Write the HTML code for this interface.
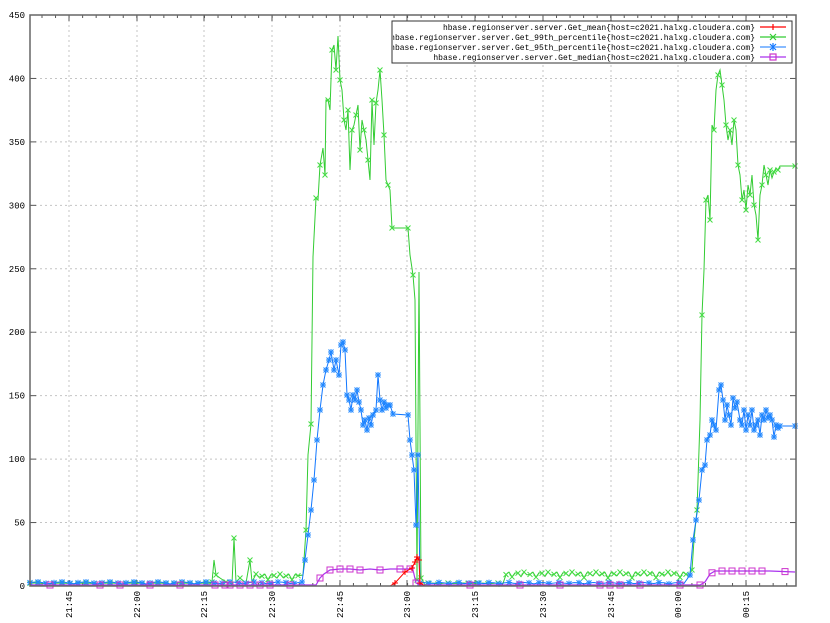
<!DOCTYPE html>
<html><head><meta charset="utf-8"><style>
html,body{margin:0;padding:0;background:#fff;width:830px;height:623px;overflow:hidden}
svg text{font-family:"Liberation Mono","DejaVu Sans Mono",monospace;font-size:9px;fill:#000}
svg text.lg{font-size:8px}
</style></head><body>
<svg id="s" width="830" height="623" xmlns="http://www.w3.org/2000/svg">
<g id="grid" stroke="#c4c4c4" stroke-width="1" stroke-dasharray="2,3"></g>
<g id="ticks" stroke="#555" stroke-width="1"></g>
<g id="labels"></g>
<g id="data"></g>
<rect x="30" y="15" width="766" height="571" fill="none" stroke="#666" stroke-width="1.5"/>
<rect x="392" y="21" width="400" height="42" fill="#fff" stroke="#333" stroke-width="1"/>
<svg x="393" y="21" width="398" height="42" overflow="hidden">
<g text-anchor="end">
<text class="lg" x="362" y="9">hbase.regionserver.server.Get_mean{host=c2021.halxg.cloudera.com}</text>
<text class="lg" x="362" y="19">hbase.regionserver.server.Get_99th_percentile{host=c2021.halxg.cloudera.com}</text>
<text class="lg" x="362" y="29">hbase.regionserver.server.Get_95th_percentile{host=c2021.halxg.cloudera.com}</text>
<text class="lg" x="362" y="39">hbase.regionserver.server.Get_median{host=c2021.halxg.cloudera.com}</text>
</g>
</svg>
<g stroke-width="1.2">
<line x1="760" y1="27" x2="786" y2="27" stroke="#f00"/><line x1="773" y1="24" x2="773" y2="30" stroke="#f00"/>
<line x1="760" y1="37" x2="786" y2="37" stroke="#3c3"/><path d="M770 34l6 6M776 34l-6 6" stroke="#3c3"/>
<line x1="760" y1="47" x2="786" y2="47" stroke="#8bf" stroke-width="2"/><path d="M770 44l6 6M776 44l-6 6M773 43v8" stroke="#17f"/>
<line x1="760" y1="57" x2="786" y2="57" stroke="#a3e"/><rect x="770" y="54" width="6" height="6" fill="none" stroke="#c3c"/>
</g>
</svg>
<script>
const NS="http://www.w3.org/2000/svg";
function el(p,t,a){const e=document.createElementNS(NS,t);for(const k in a)e.setAttribute(k,a[k]);p.appendChild(e);return e;}
const grid=document.getElementById('grid'),ticks=document.getElementById('ticks'),lab=document.getElementById('labels'),data=document.getElementById('data');
const y0=586,sc=571/450;
for(let v=0;v<=450;v+=50){const y=y0-v*sc;
 if(v>0&&v<450)el(grid,'line',{x1:30,y1:y,x2:796,y2:y});
 el(ticks,'line',{x1:30,y1:y,x2:36,y2:y});el(ticks,'line',{x1:790,y1:y,x2:796,y2:y});
 const t=el(lab,'text',{x:25,y:y+3,'text-anchor':'end'});t.textContent=v;}
const xs=[69,137,204,272,340,407,475,543,611,678,746],nm=["21:45","22:00","22:15","22:30","22:45","23:00","23:15","23:30","23:45","00:00","00:15"];
xs.forEach((x,i)=>{el(grid,'line',{x1:x,y1:15,x2:x,y2:586});
 el(ticks,'line',{x1:x,y1:586,x2:x,y2:580});el(ticks,'line',{x1:x,y1:15,x2:x,y2:21});
 const t=el(lab,'text',{x:0,y:0,'text-anchor':'end',transform:`translate(${x+3},591) rotate(-90)`});t.textContent=nm[i];});
for(let x=69-13.5*2;x<796;x+=13.54){el(ticks,'line',{x1:x,y1:586,x2:x,y2:583});el(ticks,'line',{x1:x,y1:15,x2:x,y2:18});}
function noise(a,b,base,amp,step){const r=[];for(let x=a;x<=b;x+=step)r.push([x,base-Math.abs(Math.sin(x*1.7)*amp)]);return r;}
function P(arr){const r=[];for(let i=0;i<arr.length;i+=2)r.push([arr[i],arr[i+1]]);return r;}
const green=[].concat(noise(30,210,584,1,4),P([212,582,214,560,216,575,220,578,226,582,232,584,234,538,236,582,240,578,246,583,250,560,252,582]),noise(256,300,580,6,3),
P([303,575,306,530,308,455,311,424,313,257,316,198,318,200,320,165,323,148,325,175,326,100,328,100,330,110,332,50,334,45,336,70,338,36,340,80,342,90,344,120,346,130,348,110,350,170,352,130,354,125,356,115,358,105,360,150,362,120,364,130,366,140,368,160,370,180,372,100,374,145,376,103,378,90,380,70,382,100,384,135,386,180,388,185,390,190,392,228,395,228,408,228,410,255,413,275,415,300,417,580,419,272,421,578,425,585]),
noise(428,505,584,1,5),noise(506,690,578,6,3),P([692,570,694,540,697,510,700,420,702,315,704,270,706,200,708,195,710,220,712,125,714,130,716,90,718,75,720,70,722,85,724,100,726,125,728,140,730,130,732,145,734,120,736,130,738,165,740,175,742,200,744,190,746,210,748,185,750,195,752,175,754,205,756,215,758,240,760,195,762,185,764,165,766,175,768,185,770,170,772,178,774,172,776,168,778,170,780,166,795,166]));
const blue=[].concat(noise(30,302,584,2,4),P([305,560,308,535,311,510,314,480,317,440,320,410,323,385,326,370,329,360,331,352,334,370,336,360,339,375,341,345,343,342,345,350,347,395,349,400,351,410,353,395,355,400,357,390,359,402,361,410,363,425,365,420,367,430,369,418,371,425,373,415,376,410,378,375,380,400,382,410,384,402,386,408,388,405,390,405,393,414,408,415,410,440,412,455,414,470,416,525,418,455,420,583]),
noise(424,688,584,1.5,5),P([690,575,693,540,696,520,699,500,702,470,705,465,707,440,710,435,712,420,714,425,716,430,719,390,721,385,723,400,725,420,727,405,729,415,731,425,733,398,735,408,737,402,740,420,742,425,744,410,746,430,748,415,750,425,752,410,754,430,756,425,758,420,760,435,762,415,764,420,766,410,768,418,770,415,772,420,774,437,776,425,778,428,780,426,795,426]));
const mag=[].concat(P([30,585,316,585,320,578,324,574,330,570,340,569,350,569,360,570,370,569,380,570,390,569,400,569,410,569,413,570,416,583,420,585,700,585,705,582,710,574,715,571,730,571,750,571,770,571,795,572]));
const red=P([30,586,390,586,395,583,405,572,412,568,415,562,417,557,419,560,420,583,425,586,795,586]);
function line(pts,c,w){el(data,'polyline',{points:pts.map(p=>p.join(',')).join(' '),fill:'none',stroke:c,'stroke-width':w});}
line(green,'#3c3',1);
green.forEach((p,i)=>{if(i%2==0)el(data,'path',{d:`M${p[0]-2.5} ${p[1]-2.5}l5 5M${p[0]+2.5} ${p[1]-2.5}l-5 5`,stroke:'#4d4','stroke-width':1});});
line(blue,'#17f',1);
blue.forEach((p,i)=>{if(i%2==0||p[1]<580)el(data,'path',{d:`M${p[0]-2.5} ${p[1]-2.5}l5 5M${p[0]+2.5} ${p[1]-2.5}l-5 5M${p[0]} ${p[1]-3}v6M${p[0]-3} ${p[1]}h6`,stroke:'#28f','stroke-width':1});});
line(mag,'#a3e',1.2);
[50,100,120,150,180,215,225,230,240,250,260,270,290,320,330,340,350,360,380,400,410,416,470,520,560,600,610,620,640,680,700,712,722,732,742,752,762,785].forEach(x=>{let y=585;for(let i=1;i<mag.length;i++){if(mag[i][0]>=x){const a=mag[i-1],b=mag[i];y=a[1]+(b[1]-a[1])*(x-a[0])/((b[0]-a[0])||1);break;}}
 el(data,'rect',{x:x-3,y:y-3,width:6,height:6,fill:'none',stroke:'#c3c','stroke-width':1});});
line(red,'#f00',1);
red.slice(2,9).forEach(p=>el(data,'path',{d:`M${p[0]-3} ${p[1]}h6M${p[0]} ${p[1]-3}v6`,stroke:'#f00','stroke-width':1}));
</script>
</body></html>
